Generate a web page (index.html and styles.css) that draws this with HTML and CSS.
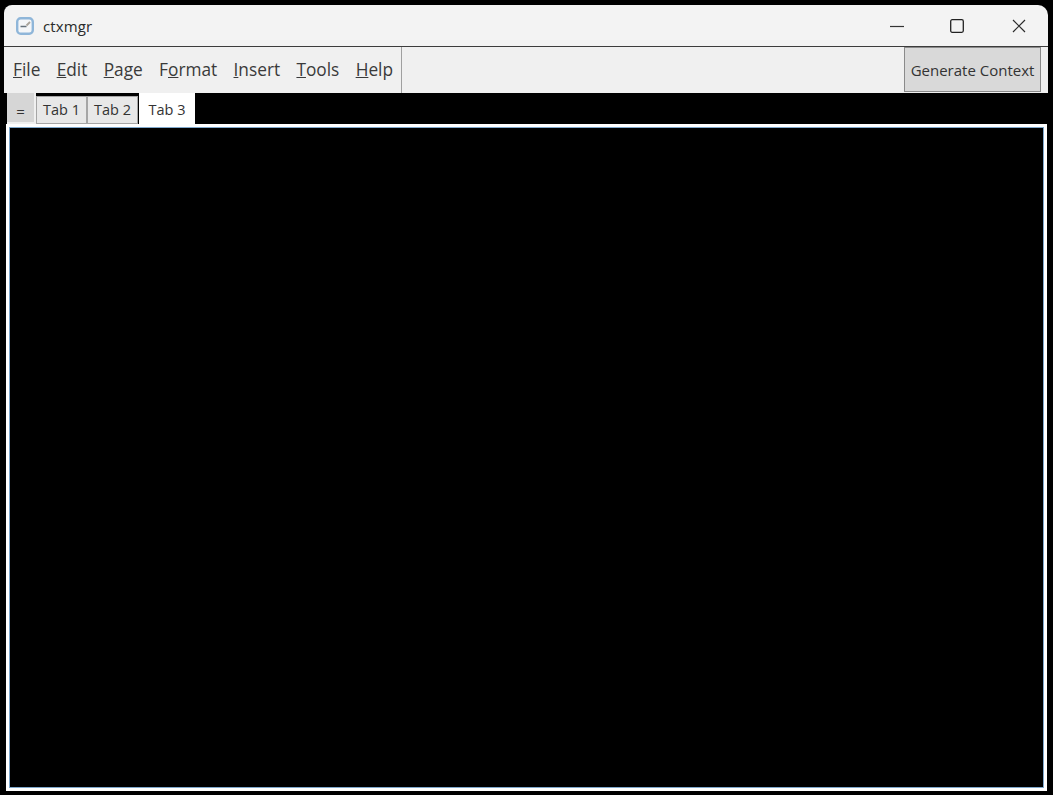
FILE: index.html
```html
<!DOCTYPE html>
<html lang="en">
<head>
<meta charset="utf-8">
<title>ctxmgr</title>
<link rel="stylesheet" href="styles.css">
</head>
<body>
<div class="window">
  <header class="titlebar">
    <div class="title-left">
      <svg class="app-icon" width="18" height="18" viewBox="0 0 18 18">
        <rect x="1.2" y="1.2" width="15.6" height="15.6" rx="3.5" fill="#f4f6f8" stroke="#8fb6d9" stroke-width="2.4"/>
        <path d="M4.5 9.5h6" stroke="#66727c" stroke-width="1.5" fill="none"/>
        <path d="M10.5 8.5l3.5-3.5" stroke="#a9a39a" stroke-width="1.8" fill="none"/>
      </svg>
      <span class="title-text">ctxmgr</span>
    </div>
    <div class="controls">
      <div class="ctrl"><svg width="14" height="14" viewBox="0 0 14 14"><path d="M0 7.5h14" stroke="#333" stroke-width="1.2" fill="none"/></svg></div>
      <div class="ctrl"><svg width="14" height="14" viewBox="0 0 14 14"><rect x="0.7" y="0.7" width="12.6" height="12.6" rx="1.5" stroke="#222" stroke-width="1.3" fill="none"/></svg></div>
      <div class="ctrl"><svg width="14" height="14" viewBox="0 0 14 14"><path d="M1 1l12 12M13 1L1 13" stroke="#2b2b2b" stroke-width="1.2" fill="none"/></svg></div>
    </div>
  </header>
  <nav class="menubar">
    <div class="menus">
      <span class="menu"><u>F</u>ile</span>
      <span class="menu"><u>E</u>dit</span>
      <span class="menu"><u>P</u>age</span>
      <span class="menu">F<u>o</u>rmat</span>
      <span class="menu"><u>I</u>nsert</span>
      <span class="menu"><u>T</u>ools</span>
      <span class="menu"><u>H</u>elp</span>
    </div>
    <button class="generate">Generate Context</button>
  </nav>
  <div class="tabstrip">
    <div class="tab-menu">=</div>
    <div class="tab">Tab 1</div>
    <div class="tab">Tab 2</div>
    <div class="tab active">Tab 3</div>
  </div>
  <main class="editor"></main>
</div>
</body>
</html>
```
FILE: styles.css
```css
* { box-sizing: border-box; }
html, body { margin: 0; height: 100%; background: #000; overflow: hidden; }
body { padding: 5px 5px 4px 4px; font-family: "Open Sans", "Noto Sans", "Liberation Sans", sans-serif; color: #333; }
.window { height: 100%; display: flex; flex-direction: column; background: #000; }
.titlebar { height: 42px; flex: none; background: #f3f3f3; border-bottom: 1px solid #3c3c3c; border-radius: 8px 10px 0 0; display: flex; align-items: center; justify-content: space-between; }
.title-left { display: flex; align-items: center; padding-left: 12px; gap: 9px; }
.app-icon { display: block; }
.title-text { font-size: 15px; letter-spacing: 0.1px; color: #2a2a2a; }
.controls { display: flex; }
.ctrl { width: 60px; display: flex; justify-content: center; align-items: center; }
.ctrl:last-child { width: 58px; margin-left: 3px; }
.menubar { height: 46px; flex: none; background: #f0f0f0; display: flex; justify-content: space-between; }
.menus { display: flex; align-items: center; gap: 16.3px; padding: 0 8px 2px 9px; border-right: 1px solid #a0a0a0; }
.menu { font-size: 17.3px; color: #3a3a3a; }
.generate { width: 137px; margin: 0 7px 1px 0; background: #d9d9d9; border: 1px solid #8a8a8a; font: inherit; font-size: 15px; color: #333; padding: 1px 0 0; }
.tabstrip { height: 31px; flex: none; display: flex; align-items: flex-start; padding-left: 3px; }
.tab-menu { width: 29px; height: 31px; background: #d6d6d6; border-right: 2px solid #f0f0f0; border-bottom: 2px solid #f0f0f0; text-align: center; font-size: 15px; line-height: 36px; }
.tab { width: 51px; height: 28px; margin-top: 3px; background: #e8e8e8; border: 1px solid #a6a6a6; font-size: 14.5px; line-height: 26px; text-align: center; }
.tab.active { width: 56px; height: 31px; margin: 0 0 0 1px; background: #fff; border: 0; line-height: 34px; }
.editor { flex: 1; background: #000; border: 3px solid #fff; box-shadow: inset 0 0 0 1px #7fa8cc; margin: 0 1px 0 2px; }
```
